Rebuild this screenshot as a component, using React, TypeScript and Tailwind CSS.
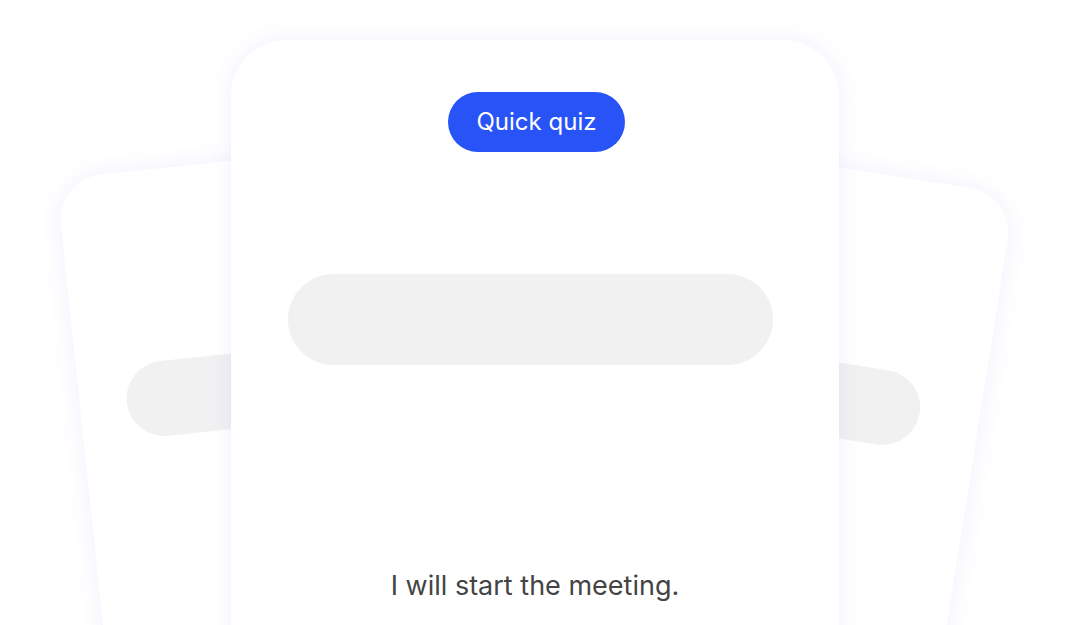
const cardShadow = "shadow-[0_0_22px_rgba(90,96,230,0.09)]";

const SideCard = ({ side }: { side: "left" | "right" }) => {
  const place =
    side === "left"
      ? "left-[56px] top-[179px] origin-top-left -rotate-6"
      : "left-[515px] top-[195px] origin-top-right rotate-[9deg]";
  const pill = side === "left" ? "ml-[47px] mr-[47px] mt-[192px]" : "ml-[47px] mr-[60px] mt-[193px]";

  return (
    <div className={`absolute ${place} w-[500px] h-[620px] rounded-[46px] bg-white ${cardShadow}`}>
      <div className={`${pill} h-[75px] rounded-full bg-[#f1f1f2]`} />
    </div>
  );
};

export default function App() {
  return (
    <div className="relative h-[625px] w-full overflow-hidden bg-white font-['Inter',sans-serif]">
      <SideCard side="left" />
      <SideCard side="right" />

      {/* main card */}
      <div className="relative pt-[40px]">
        <div
          className={`mx-auto flex h-[700px] w-[608px] flex-col items-center rounded-[56px] bg-white pt-[52px] ${cardShadow}`}
        >
          <button className="ml-[3px] h-[60px] w-[177px] rounded-full bg-[#2753f7] text-[24px] font-normal text-white">
            Quick quiz
          </button>

          <div className="mt-[122px] self-start ml-[57px] h-[91px] w-[485px] rounded-full bg-[#f1f1f1]" />

          <p className="mt-[205px] text-[27px] leading-[32px] text-[#444]">I will start the meeting.</p>
        </div>
      </div>
    </div>
  );
}
